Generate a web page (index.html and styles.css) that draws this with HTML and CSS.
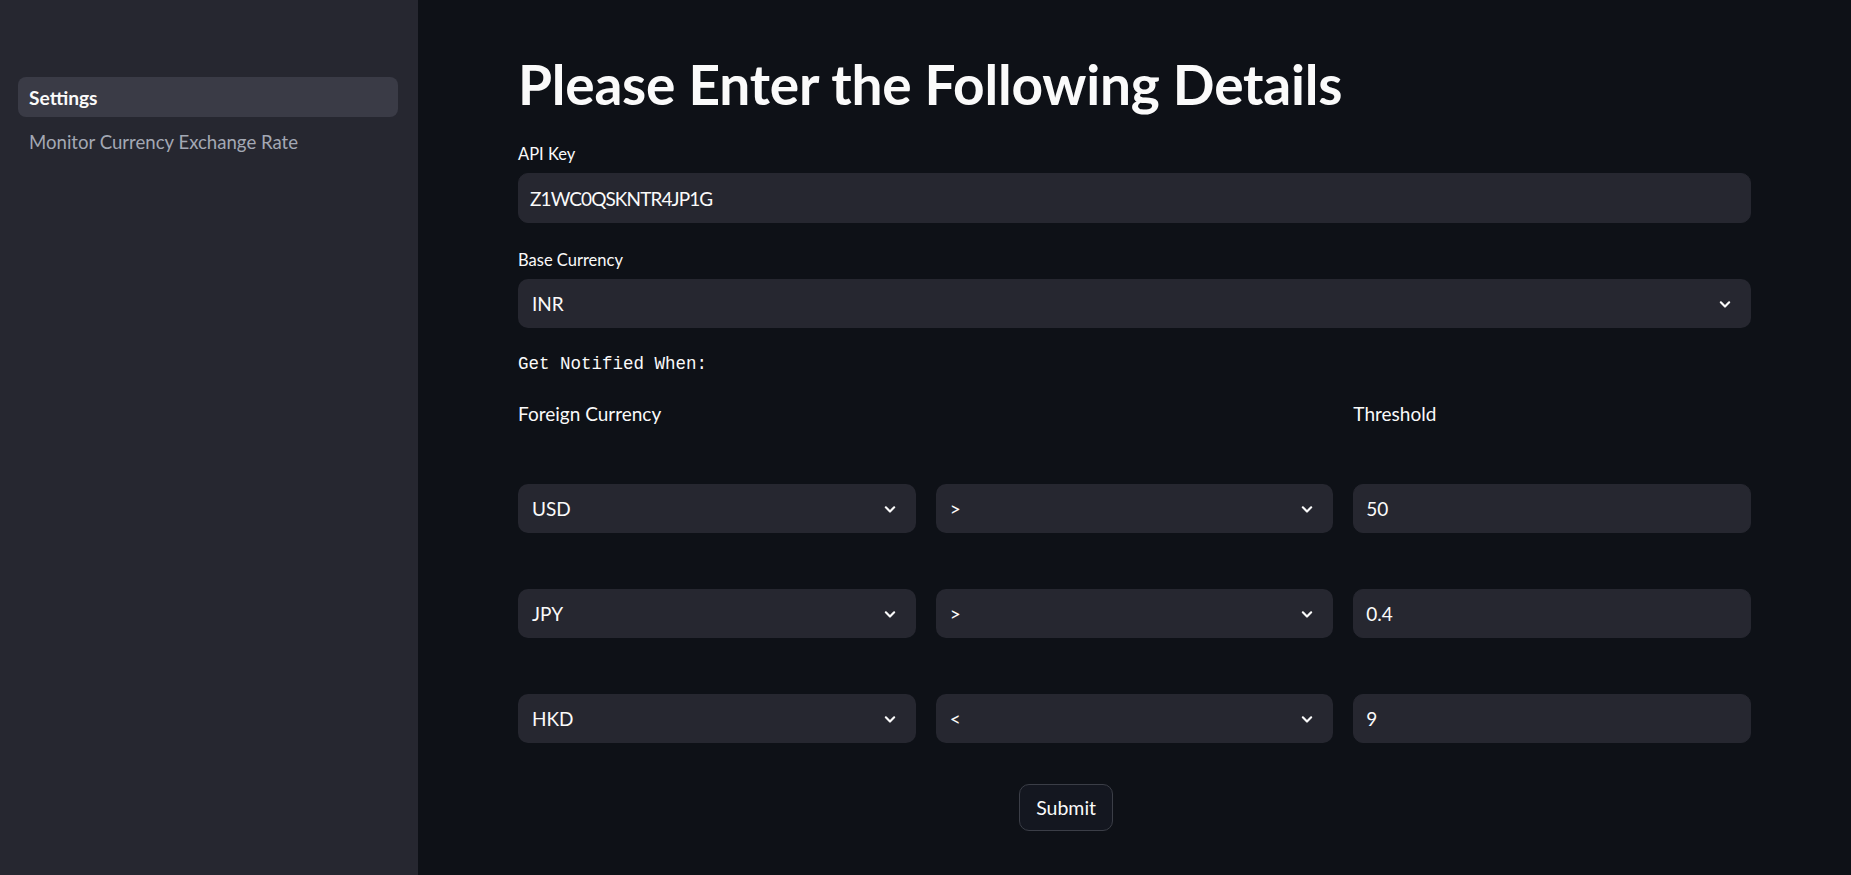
FILE: index.html
```html
<!DOCTYPE html>
<html lang="en">
<head>
<meta charset="utf-8">
<title>Settings</title>
<link rel="stylesheet" href="styles.css">
</head>
<body>
<div class="app">
  <aside class="sidebar">
    <nav class="nav">
      <a class="nav-item active">Settings</a>
      <a class="nav-item">Monitor Currency Exchange Rate</a>
    </nav>
  </aside>
  <main class="main">
    <div class="block">
      <h1 class="title">Please Enter the Following Details</h1>

      <div class="field">
        <div class="label">API Key</div>
        <div class="input key"><span>Z1WC0QSKNTR4JP1G</span></div>
      </div>

      <div class="field">
        <div class="label">Base Currency</div>
        <div class="select"><span>INR</span><svg class="chev" viewBox="0 0 24 24"><path d="M7 10l5 5 5-5"/></svg></div>
      </div>

      <div class="mono">Get Notified When:</div>

      <div class="grid3">
        <div class="head">Foreign Currency</div>
        <div></div>
        <div class="head">Threshold</div>
      </div>

      <div class="grid3">
        <div class="field"><div class="label hidden">Currency</div><div class="select"><span>USD</span><svg class="chev" viewBox="0 0 24 24"><path d="M7 10l5 5 5-5"/></svg></div></div>
        <div class="field"><div class="label hidden">Condition</div><div class="select"><span>&gt;</span><svg class="chev" viewBox="0 0 24 24"><path d="M7 10l5 5 5-5"/></svg></div></div>
        <div class="field"><div class="label hidden">Value</div><div class="input num"><span>50</span></div></div>
      </div>

      <div class="grid3">
        <div class="field"><div class="label hidden">Currency</div><div class="select"><span>JPY</span><svg class="chev" viewBox="0 0 24 24"><path d="M7 10l5 5 5-5"/></svg></div></div>
        <div class="field"><div class="label hidden">Condition</div><div class="select"><span>&gt;</span><svg class="chev" viewBox="0 0 24 24"><path d="M7 10l5 5 5-5"/></svg></div></div>
        <div class="field"><div class="label hidden">Value</div><div class="input num"><span>0.4</span></div></div>
      </div>

      <div class="grid3">
        <div class="field"><div class="label hidden">Currency</div><div class="select"><span>HKD</span><svg class="chev" viewBox="0 0 24 24"><path d="M7 10l5 5 5-5"/></svg></div></div>
        <div class="field"><div class="label hidden">Condition</div><div class="select"><span>&lt;</span><svg class="chev" viewBox="0 0 24 24"><path d="M7 10l5 5 5-5"/></svg></div></div>
        <div class="field"><div class="label hidden">Value</div><div class="input num"><span>9</span></div></div>
      </div>

      <div class="grid5">
        <div></div>
        <div></div>
        <div><button class="btn" type="button">Submit</button></div>
        <div></div>
        <div></div>
      </div>
    </div>
  </main>
</div>
</body>
</html>
```

FILE: styles.css
```css
* { box-sizing: border-box; }

html, body {
  margin: 0;
  padding: 0;
  background: #0e1117;
  color: #fafafa;
  font-family: Lato, "Noto Sans", sans-serif;
}

.app {
  display: flex;
  min-height: 100vh;
}

.sidebar {
  width: 418px;
  flex-shrink: 0;
  background: #262730;
  padding: 77px 20px 0 18px;
}

.nav {
  display: flex;
  flex-direction: column;
  gap: 5px;
}

.nav-item {
  height: 40px;
  display: flex;
  align-items: center;
  padding: 0 11px;
  border-radius: 8px;
  font-size: 18.6px;
  color: #a3a8b4;
  cursor: pointer;
}

.nav-item.active {
  background: #3a3b46;
  color: #fafafa;
  font-weight: 700;
  font-size: 19.2px;
}

.main {
  flex: 1;
  padding: 51px 100px 40px;
  min-width: 0;
}

.block {
  display: flex;
  flex-direction: column;
  gap: 20px;
}

.title {
  margin: 0;
  font-size: 55px;
  line-height: 66px;
  font-weight: 700;
  letter-spacing: -0.2px;
}

.field {
  display: flex;
  flex-direction: column;
}

.label {
  height: 31px;
  margin-bottom: 5px;
  padding-top: 3px;
  font-size: 16.5px;
  line-height: 28px;
  color: #fafafa;
}

.label.hidden {
  visibility: hidden;
}

.input,
.select {
  background: #262730;
  border-radius: 10px;
  display: flex;
  align-items: center;
  font-size: 19px;
  color: #fafafa;
}

.input {
  height: 50px;
  padding: 0 11px;
  border: 1px solid #262730;
}

.input.key {
  letter-spacing: -0.9px;
}

.input.num {
  height: 49px;
  padding: 0 12px;
}

.select {
  height: 49px;
  padding: 0 16px 0 14px;
  justify-content: space-between;
}

.chev {
  width: 20px;
  height: 20px;
  fill: none;
  stroke: #fafafa;
  stroke-width: 2.6;
  stroke-linecap: round;
  stroke-linejoin: round;
}

.mono {
  font-family: "Liberation Mono", "DejaVu Sans Mono", monospace;
  font-size: 17.5px;
  line-height: 28px;
  padding-top: 2px;
  height: 28px;
  white-space: pre;
}

.grid3 {
  display: grid;
  grid-template-columns: repeat(3, 1fr);
  gap: 20px;
}

.head {
  font-size: 19px;
  line-height: 32px;
  padding-top: 2px;
  height: 32px;
}

.grid5 {
  display: grid;
  grid-template-columns: repeat(5, 1fr);
  gap: 20px;
  padding-top: 21px;
}

.btn {
  height: 47px;
  padding: 0 16px;
  background: #141720;
  border: 1px solid #3b3e47;
  border-radius: 10px;
  color: #fafafa;
  font-family: Lato, "Noto Sans", sans-serif;
  font-size: 19.5px;
  cursor: pointer;
}
```
